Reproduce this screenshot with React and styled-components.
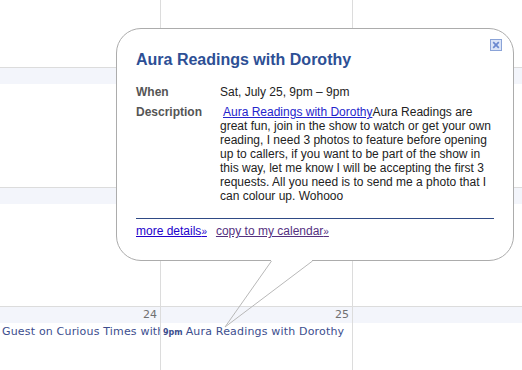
import React from "react";
import styled, { createGlobalStyle } from "styled-components";

const GlobalStyle = createGlobalStyle`
  html, body {
    margin: 0;
    padding: 0;
    background: #ffffff;
    overflow: hidden;
  }
`;

const weeks = [
  { height: 67, head: false, days: [{}, {}, {}] },
  { height: 120, head: true, days: [{ n: "" }, { n: "" }, { n: "" }] },
  {
    height: 119,
    head: true,
    days: [{ n: "" }, { n: "" }, { n: "", events: [{ title: "Psychic Hour with Heather" }] }],
  },
  {
    height: 64,
    head: true,
    days: [
      { n: "24", events: [{ title: "Guest on Curious Times with Marie" }] },
      { n: "25", events: [{ time: "9pm", title: "Aura Readings with Dorothy" }] },
      { n: "" },
    ],
  },
];

const App = () => {
  return (
    <>
      <GlobalStyle />
      <Page>
        <Calendar>
          {weeks.map((w, i) => (
            <Week key={i} style={{ height: w.height }}>
              {w.days.map((d, j) => (
                <Day key={j}>
                  {w.head && <DayHead>{d.n}</DayHead>}
                  {d.events &&
                    d.events.map((e, k) => (
                      <Event key={k}>
                        {e.time && <EventTime>{e.time}</EventTime>}
                        {e.title}
                      </Event>
                    ))}
                </Day>
              ))}
            </Week>
          ))}
        </Calendar>

        <Bubble>
          <Close aria-label="close">
            <svg width="12" height="12" viewBox="0 0 12 12">
              <rect x="0.5" y="0.5" width="11" height="11" fill="#dbe4f7" stroke="#8aa3d8" />
              <path d="M3.2 3.2 L8.8 8.8 M8.8 3.2 L3.2 8.8" stroke="#6a88cf" strokeWidth="1.7" />
            </svg>
          </Close>
          <Title>Aura Readings with Dorothy</Title>
          <Details>
            <Label>When</Label>
            <Value>Sat, July 25, 9pm – 9pm</Value>
            <Label>Description</Label>
            <Value>
              <DescLink href="#">Aura Readings with Dorothy</DescLink>Aura Readings are great
              fun, join in the show to watch or get your own reading, I need 3 photos to feature
              before opening up to callers, if you want to be part of the show in this way, let me
              know I will be accepting the first 3 requests. All you need is to send me a photo
              that I can colour up. Wohooo
            </Value>
          </Details>
          <Rule />
          <Links>
            <ActionLink href="#" $visited={false}>
              more details<Raquo>»</Raquo>
            </ActionLink>
            <ActionLink href="#" $visited>
              copy to my calendar<Raquo>»</Raquo>
            </ActionLink>
          </Links>
        </Bubble>

        <Tail width="100" height="75" viewBox="0 0 100 75">
          <rect x="51" y="1" width="41" height="3" fill="#ffffff" />
          <path d="M51.5 3 L5 69 M92.5 3 L5 69" stroke="#b8b8b8" strokeWidth="1" fill="none" />
        </Tail>
      </Page>
    </>
  );
};

export default App;

const Page = styled.div`
  position: relative;
  width: 522px;
  height: 370px;
  overflow: hidden;
  background: #ffffff;
`;

const Calendar = styled.div`
  display: flex;
  flex-direction: column;
  width: 100%;
`;

const Week = styled.div`
  display: grid;
  grid-template-columns: 161px 192px 1fr;
`;

const Day = styled.div`
  display: flex;
  flex-direction: column;
  min-width: 0;
  border-right: 1px solid #dcdcdc;

  &:last-child {
    border-right: none;
  }
`;

const DayHead = styled.div`
  height: 16px;
  border-top: 1px solid #dcdcdc;
  background: #f3f5fb;
  padding-right: 3px;
  text-align: right;
  font-family: "DejaVu Sans", Verdana, sans-serif;
  font-size: 11px;
  line-height: 16px;
  color: #707070;
`;

const Event = styled.div`
  padding: 2px 0 0 2px;
  white-space: nowrap;
  overflow: hidden;
  font-family: "DejaVu Sans", Verdana, sans-serif;
  font-size: 11px;
  letter-spacing: 0.18px;
  line-height: 14px;
  color: #3c4e8e;
`;

const EventTime = styled.b`
  font-size: 8px;
  letter-spacing: 0;
  margin-right: 3px;
`;

const Bubble = styled.div`
  position: absolute;
  left: 116px;
  top: 28px;
  width: 358px;
  height: 191px;
  padding: 21px 19px 19px 19px;
  background: #ffffff;
  border: 1px solid #acacac;
  border-radius: 25px;
  font-family: "Liberation Sans", Arial, sans-serif;
`;

const Close = styled.div`
  position: absolute;
  top: 10px;
  right: 11px;
  width: 12px;
  height: 12px;
  line-height: 0;
  cursor: pointer;
`;

const Title = styled.div`
  font-size: 16px;
  font-weight: bold;
  line-height: 20px;
  color: #2d4f95;
  margin-bottom: 15px;
`;

const Details = styled.div`
  display: grid;
  grid-template-columns: 84px 1fr;
  row-gap: 6px;
  font-size: 12px;
  line-height: 14px;
`;

const Label = styled.div`
  font-weight: bold;
  color: #555555;
`;

const Value = styled.div`
  color: #222222;
`;

const DescLink = styled.a`
  margin-left: 3px;
  color: #2424cc;
  text-decoration: underline;
`;

const Rule = styled.div`
  height: 1px;
  background: #2f4a85;
  margin-top: 15px;
`;

const Links = styled.div`
  display: flex;
  gap: 9px;
  margin-top: 5px;
  font-size: 12px;
  line-height: 14px;
`;

const ActionLink = styled.a`
  color: ${(p) => (p.$visited ? "#55307f" : "#2200cc")};
  text-decoration: underline;
`;

const Raquo = styled.span`
  font-size: 10px;
`;

const Tail = styled.svg`
  position: absolute;
  left: 220px;
  top: 258px;
`;
